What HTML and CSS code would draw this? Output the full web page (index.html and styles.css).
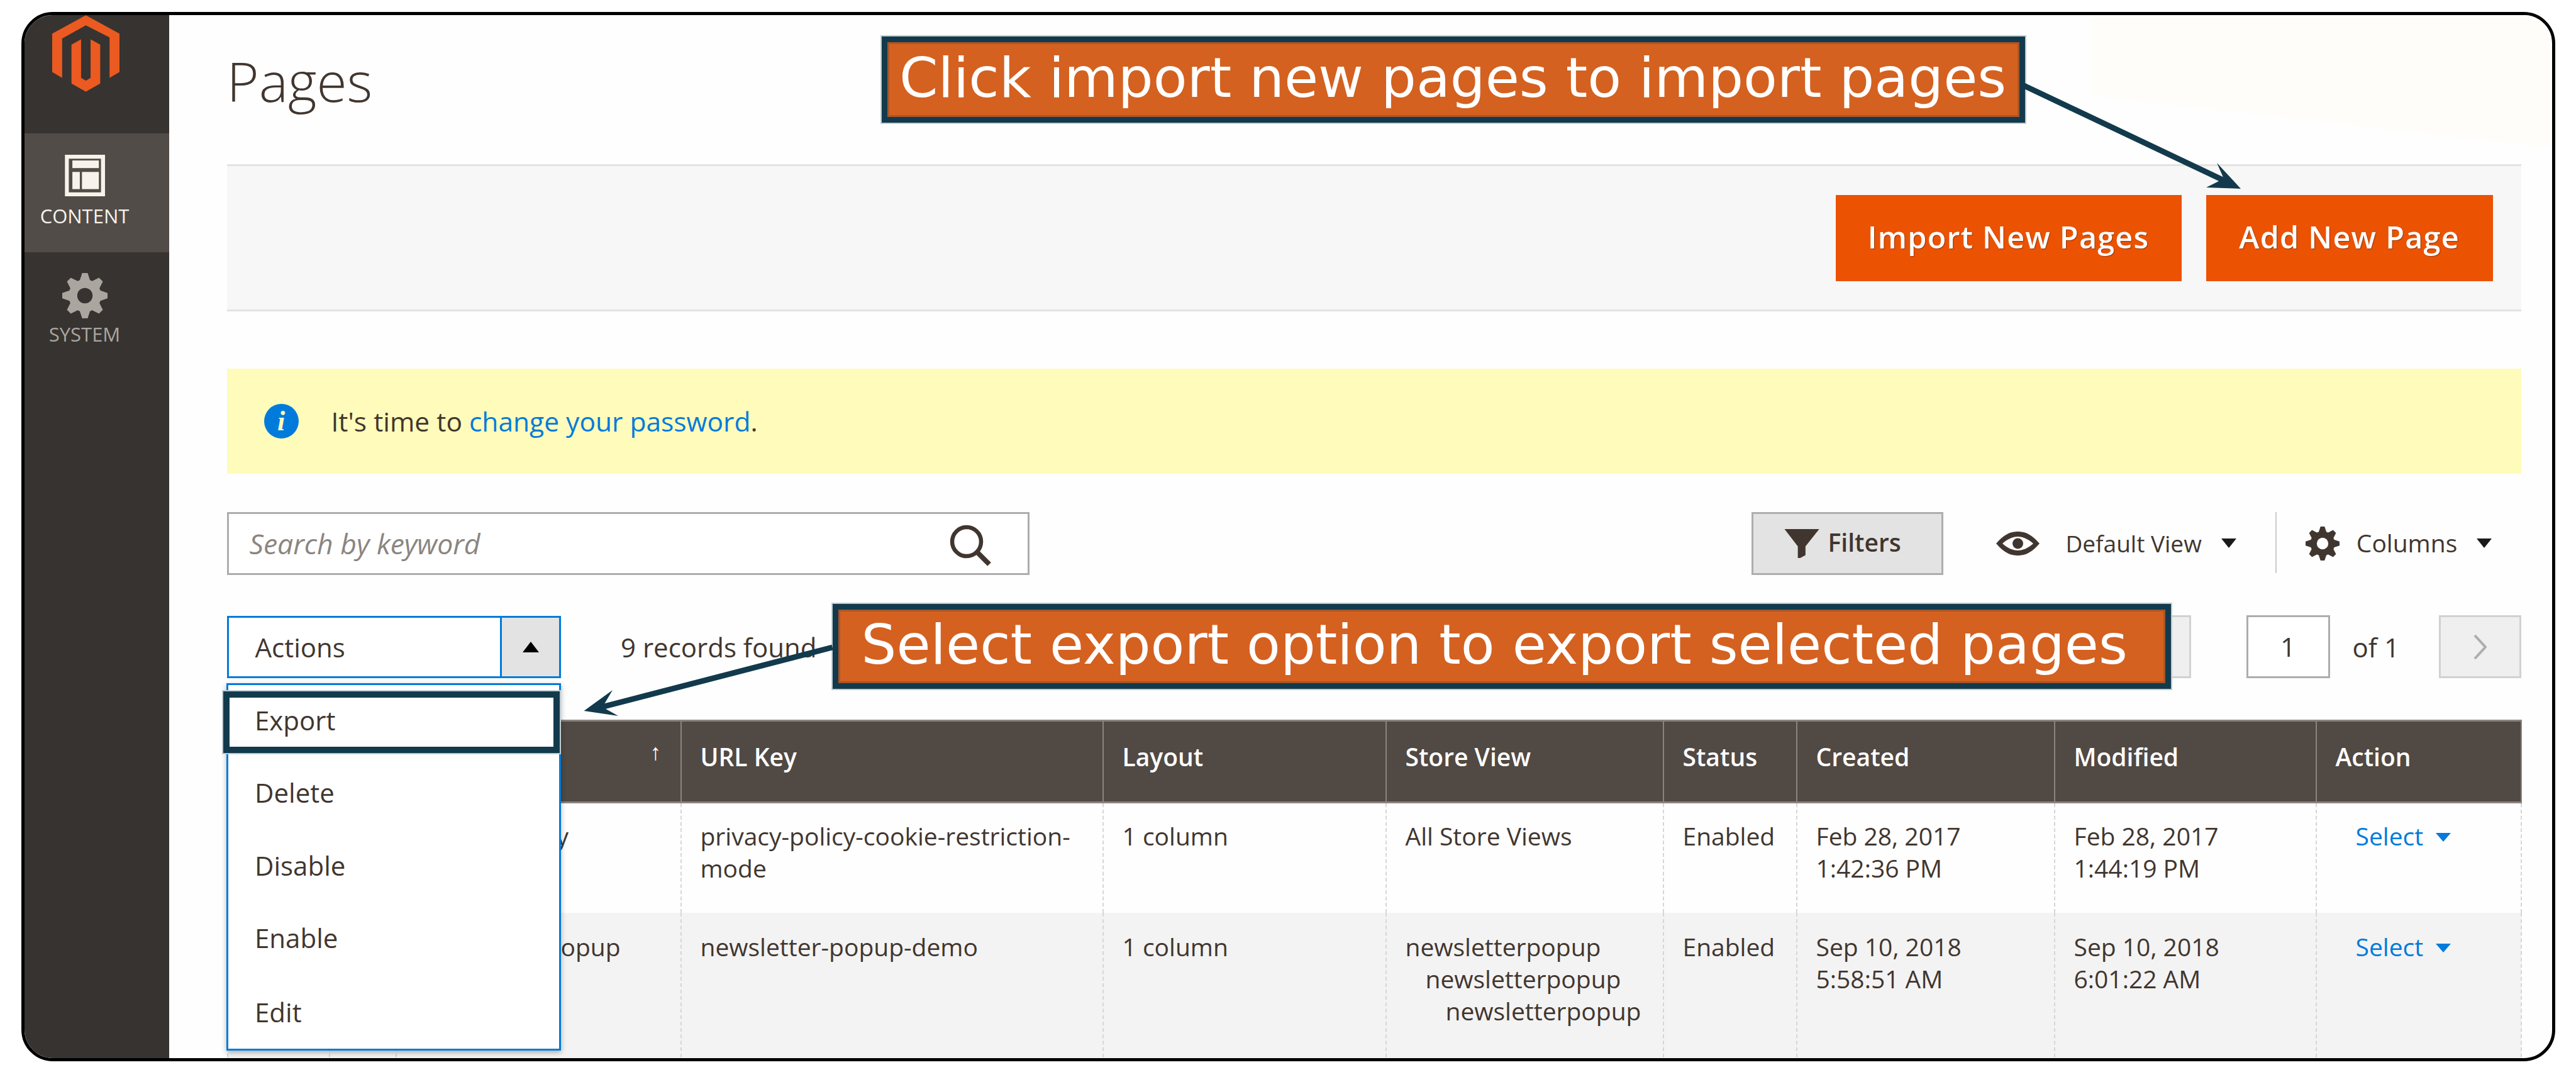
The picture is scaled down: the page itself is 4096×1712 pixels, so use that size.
FILE: index.html
```html
<!DOCTYPE html>
<html lang="en">
<head>
<meta charset="utf-8">
<title>Pages</title>
<link rel="stylesheet" href="styles.css">
</head>
<body>
<div class="frame">
  <aside class="sidebar">
    <div class="logo">
      <svg class="logo-svg" viewBox="366 100 468 532"><path d="M600 100 834 228V495L765 535V255L600 170 435 262V535L366 495V228Z"/><path d="M500 305 567 268V535L600 555 633 535V268L700 305V575L600 632 500 575Z"/></svg>
    </div>
    <div class="nav-item nav-active">
      <svg class="nav-icon-content" viewBox="255 117 305 290"><path fill-rule="evenodd" d="M268 117H548V407H268ZM295 145V380H520V145Z"/><rect x="320" y="157" width="185" height="53"/><rect x="320" y="237" width="52" height="120"/><rect x="387" y="237" width="118" height="120"/></svg>
      <span class="nav-label">CONTENT</span>
    </div>
    <div class="nav-item">
      <svg class="nav-icon-gear" viewBox="0 0 100 100"><g class="gear-teeth"><circle cx="50" cy="50" r="36"/><polygon points="44,0 56,0 62,18 38,18"/><polygon points="44,0 56,0 62,18 38,18" transform="rotate(45 50 50)"/><polygon points="44,0 56,0 62,18 38,18" transform="rotate(90 50 50)"/><polygon points="44,0 56,0 62,18 38,18" transform="rotate(135 50 50)"/><polygon points="44,0 56,0 62,18 38,18" transform="rotate(180 50 50)"/><polygon points="44,0 56,0 62,18 38,18" transform="rotate(225 50 50)"/><polygon points="44,0 56,0 62,18 38,18" transform="rotate(270 50 50)"/><polygon points="44,0 56,0 62,18 38,18" transform="rotate(315 50 50)"/></g><circle class="gear-hole-dark" cx="50" cy="50" r="17"/></svg>
      <span class="nav-label nav-label-dim">SYSTEM</span>
    </div>
  </aside>
  <main class="main">
    <h1 class="title">Pages</h1>
    <div class="page-actions">
      <button class="btn-primary btn-import">Import New Pages</button>
      <button class="btn-primary btn-add">Add New Page</button>
    </div>
    <div class="notice">
      <span class="notice-icon">i</span>
      <span class="notice-text">It's time to <a class="link">change your password</a>.</span>
    </div>
    <div class="search-row">
      <div class="search">
        <span class="placeholder">Search by keyword</span>
        <svg class="search-icon" viewBox="0 0 80 80"><circle cx="32" cy="32" r="23" fill="none" stroke-width="6.500"/><path d="M49 49 68 68" fill="none" stroke-width="8"/></svg>
      </div>
      <button class="btn-filter">
        <svg class="filter-icon" viewBox="48 80 252 200"><polygon points="50,80 290,80 195,200 195,260 155,282 142,282 142,200"/></svg>
        <span class="filter-label">Filters</span>
      </button>
      <svg class="eye-icon" viewBox="0 0 69 38"><path fill-rule="evenodd" d="M0 19C14 3 24 0 34.500 0S55 3 69 19C55 35 45 38 34.500 38S14 35 0 19ZM10 19C18 26 26 30 34.500 30S51 26 59 19C51 12 43 8 34.500 8S18 12 10 19Z"/><circle cx="34.500" cy="19" r="8.500"/></svg>
      <span class="tool-label tool-view">Default View</span>
      <span class="caret-down"></span>
      <span class="divider"></span>
      <svg class="cog-icon" viewBox="0 0 100 100"><g><circle cx="50" cy="50" r="36"/><polygon points="44,0 56,0 62,18 38,18"/><polygon points="44,0 56,0 62,18 38,18" transform="rotate(45 50 50)"/><polygon points="44,0 56,0 62,18 38,18" transform="rotate(90 50 50)"/><polygon points="44,0 56,0 62,18 38,18" transform="rotate(135 50 50)"/><polygon points="44,0 56,0 62,18 38,18" transform="rotate(180 50 50)"/><polygon points="44,0 56,0 62,18 38,18" transform="rotate(225 50 50)"/><polygon points="44,0 56,0 62,18 38,18" transform="rotate(270 50 50)"/><polygon points="44,0 56,0 62,18 38,18" transform="rotate(315 50 50)"/></g><circle class="gear-hole-light" cx="50" cy="50" r="17"/></svg>
      <span class="tool-label tool-columns">Columns</span>
      <span class="caret-down"></span>
    </div>
    <div class="actions-row">
      <div class="actions-select">
        <span class="actions-label">Actions</span>
        <span class="actions-toggle"><span class="caret-up"></span></span>
      </div>
      <span class="records">9 records found</span>
      <div class="pager">
        <span class="page-btn"></span>
        <span class="page-input">1</span>
        <span class="page-of">of 1</span>
        <span class="page-btn page-next"><svg class="chevron" viewBox="0 0 21 39"><path d="M2 1 19 19.500 2 38" fill="none" stroke-width="4"/></svg></span>
      </div>
    </div>
    <table class="grid">
      <colgroup>
        <col class="c1"><col class="c2"><col class="c3"><col class="c4"><col class="c5"><col class="c6"><col class="c7"><col class="c8"><col class="c9"><col class="c10">
      </colgroup>
      <thead>
        <tr><th></th><th>ID</th><th><span class="sort">↑</span>Title</th><th>URL Key</th><th>Layout</th><th>Store View</th><th>Status</th><th>Created</th><th>Modified</th><th>Action</th></tr>
      </thead>
      <tbody>
        <tr class="row-a">
          <td></td><td>1</td><td>Privacy Policy</td>
          <td>privacy-policy-cookie-restriction-mode</td>
          <td>1 column</td><td>All Store Views</td><td>Enabled</td>
          <td>Feb 28, 2017<br>1:42:36 PM</td><td>Feb 28, 2017<br>1:44:19 PM</td>
          <td class="cell-action"><a class="link">Select</a><span class="caret-select"></span></td>
        </tr>
        <tr class="row-b">
          <td></td><td>2</td><td>Newsletter Popup</td>
          <td>newsletter-popup-demo</td>
          <td>1 column</td>
          <td class="cell-store"><div>newsletterpopup</div><div class="ind1">newsletterpopup</div><div class="ind2">newsletterpopup</div></td>
          <td>Enabled</td>
          <td>Sep 10, 2018<br>5:58:51 AM</td><td>Sep 10, 2018<br>6:01:22 AM</td>
          <td class="cell-action"><a class="link">Select</a><span class="caret-select"></span></td>
        </tr>
      </tbody>
    </table>
  </main>
  <div class="glare"></div>
</div>

<ul class="dropdown">
  <li>Export</li><li>Delete</li><li>Disable</li><li>Enable</li><li>Edit</li>
</ul>
<div class="export-highlight"></div>
<div class="callout callout-import">Click import new pages to import pages</div>
<div class="callout callout-export">Select export option to export selected pages</div>
<svg class="arrows" viewBox="0 0 4096 1712">
  <line x1="3218" y1="136" x2="3545" y2="291"/>
  <polygon points="3563,300 3525,259 3536,284 3508,298"/>
  <line x1="1323.600" y1="1029" x2="945" y2="1127"/>
  <polygon points="928.500,1130 974,1097 958,1124 983,1138"/>
</svg>
</body>
</html>
```
FILE: styles.css
```css
* { box-sizing: border-box; }
html, body { margin: 0; padding: 0; background: #fff; }
body {
  width: 4096px;
  height: 1712px;
  overflow: hidden;
  font-family: "Open Sans", sans-serif;
  color: #41362f;
}
.frame {
  position: relative;
  margin: 18.5px 0 0 34px;
  width: 4028.6px;
  height: 1668.5px;
  border: 5.5px solid #000;
  border-radius: 50px;
  display: flex;
  overflow: hidden;
  background: #fefefe;
}
.glare {
  position: absolute;
  left: 3287.500px;
  top: 0;
  width: 730px;
  height: 212px;
  background: #fffdfa;
  clip-path: polygon(0 0, 100% 0, 100% 100%, 0 61%);
}
/* sidebar */
.sidebar {
  flex: 0 0 230px;
  background: #373330;
  display: flex;
  flex-direction: column;
}
.logo { height: 188.600px; padding-left: 44px; }
.logo-svg { display: block; width: 107px; height: 122px; fill: #eb5a20; }
.nav-item {
  height: 188.600px;
  padding: 33.500px 39px 0 0;
  display: flex;
  flex-direction: column;
  align-items: center;
}
.nav-active { background: #524c48; }
.nav-icon-content { display: block; width: 70px; height: 66px; fill: #f7f3eb; }
.nav-icon-gear { display: block; width: 72px; height: 72px; }
.gear-teeth { fill: #aaa69f; }
.gear-hole-dark { fill: #373330; }
.gear-hole-light { fill: #fefefe; }
.nav-label {
  margin-top: 10px;
  font-size: 31px;
  line-height: 42px;
  color: #f7f3eb;
  white-space: nowrap;
}
.nav-label-dim { color: #aaa69f; margin-top: 4px; }
/* main */
.main { position: relative; z-index: 1; flex: 1; min-width: 0; padding: 62px 49px 0 91.500px; }
.title {
  margin: 0;
  font-size: 87.500px;
  line-height: 84px;
  height: 175px;
  font-weight: 300;
  color: #41362f;
}
.page-actions {
  height: 234px;
  background: #f7f7f7;
  border-top: 3px solid #e3e3e3;
  border-bottom: 3px solid #e3e3e3;
  display: flex;
  justify-content: flex-end;
  align-items: flex-start;
  padding: 46px 45px 0 0;
  gap: 39px;
}
.btn-primary {
  height: 137px;
  background: #eb5202;
  border: 0;
  color: #fff;
  font-family: inherit;
  font-weight: 600;
  font-size: 48.500px;
  letter-spacing: 0.025em;
  text-shadow: 1px 1px 1px rgba(0,0,0,.35);
  padding: 0 0 4px;
}
.btn-import { width: 550px; }
.btn-add { width: 456px; }
.notice {
  margin-top: 91px;
  height: 167px;
  background: #fffbbb;
  display: flex;
  align-items: center;
  padding-left: 59px;
  font-size: 42.500px;
  color: #41362f;
}
.notice-icon {
  flex: 0 0 55px;
  height: 55px;
  border-radius: 50%;
  background: #007bdb;
  color: #fffbbb;
  font-family: "Liberation Serif", serif;
  font-style: italic;
  font-weight: 700;
  font-size: 44px;
  line-height: 55px;
  text-align: center;
  margin-right: 52px;
}
.link { color: #007bdb; }
.search-row {
  margin-top: 61px;
  height: 100px;
  display: flex;
  align-items: center;
  font-size: 38px;
}
.search {
  flex: 0 0 1276px;
  height: 100px;
  border: 3px solid #adadad;
  display: flex;
  align-items: center;
  justify-content: space-between;
  padding: 0 49px 0 33px;
  background: #fff;
}
.placeholder { font-style: italic; color: #8a8580; font-size: 44.500px; }
.search-icon { display: block; width: 80px; height: 80px; stroke: #41362f; margin-top: 10px; }
.btn-filter {
  margin-left: 1148px;
  flex: 0 0 305px;
  height: 100px;
  background: #e3e3e3;
  border: 3px solid #adadad;
  display: flex;
  align-items: center;
  padding: 0 0 0 49px;
  font-family: inherit;
  font-size: 39px;
  font-weight: 600;
  color: #41362f;
}
.filter-label { margin-top: -4px; }
.filter-icon { display: block; width: 58px; height: 46px; fill: #41362f; margin-right: 12px; }
.eye-icon { display: block; width: 69px; height: 38px; fill: #41362f; margin-left: 84px; }
.tool-label { white-space: nowrap; }
.tool-view { margin-left: 42px; font-size: 37px; }
.caret-down {
  width: 0; height: 0;
  border-left: 12px solid transparent;
  border-right: 12px solid transparent;
  border-top: 15px solid #1a1a1a;
  margin-left: 31px;
}
.divider { width: 2px; height: 97px; background: #ccc; margin-left: 62px; margin-top: -3px; }
.cog-icon { display: block; width: 54px; height: 54px; fill: #41362f; margin-left: 46px; }
.tool-columns { margin-left: 27px; font-size: 39px; margin-top: -3px; }
.actions-row {
  margin-top: 65px;
  height: 99px;
  display: flex;
  align-items: center;
  font-size: 42px;
}
.actions-select {
  flex: 0 0 531.500px;
  height: 99px;
  border: 3px solid #007bdb;
  display: flex;
  align-items: center;
  background: #fff;
}
.actions-label { flex: 1; padding-left: 42px; }
.actions-toggle {
  flex: 0 0 94px;
  height: 100%;
  border-left: 3px solid #007bdb;
  background: #e3e3e3;
  display: flex;
  align-items: center;
  justify-content: center;
}
.caret-up {
  width: 0; height: 0;
  border-left: 13px solid transparent;
  border-right: 13px solid transparent;
  border-bottom: 17px solid #000;
}
.records { margin-left: 95px; white-space: nowrap; }
.pager { margin-left: auto; display: flex; align-items: center; }
.page-btn {
  width: 131px;
  height: 100px;
  background: #efefef;
  border: 3px solid #d1d1d1;
  display: flex;
  align-items: center;
  justify-content: center;
}
.page-input {
  width: 133px;
  height: 100px;
  margin-left: 88px;
  background: #fff;
  border: 3px solid #adadad;
  text-align: center;
  line-height: 94px;
}
.page-of { margin-left: 36px; width: 137px; }
.chevron { display: block; width: 21px; height: 39px; stroke: #adadad; }
.grid {
  margin-top: 66px;
  width: 3647px;
  table-layout: fixed;
  border-collapse: collapse;
  font-size: 39px;
  line-height: 51px;
}
.c1 { width: 162px; } .c2 { width: 106px; } .c3 { width: 453px; } .c4 { width: 671px; }
.c5 { width: 450px; } .c6 { width: 441px; } .c7 { width: 212px; } .c8 { width: 410px; }
.c9 { width: 416px; } .c10 { width: 326px; }
.grid th {
  background: #514943;
  color: #fff;
  font-weight: 600;
  text-align: left;
  vertical-align: top;
  height: 130px;
  padding: 30px 8px 0 30px;
  border: 3px solid #8a837f;
  border-width: 3px 2px;
  white-space: nowrap;
}
.sort { float: right; font-size: 36px; font-weight: 300; margin-right: 22px; line-height: 36px; }
.grid td {
  vertical-align: top;
  padding: 26px 8px 0 30px;
  border-left: 2px dashed #d6d6d6;
  border-right: 2px dashed #d6d6d6;
  color: #41362f;
  word-break: normal;
}
.row-a td { height: 176px; background: #fefefe; }
.row-b td { height: 240px; background: #f3f3f3; }
.grid .row-b td { padding-top: 28px; }
.cell-store { white-space: nowrap; overflow: visible; }
.ind1 { padding-left: 32px; }
.ind2 { padding-left: 64px; }
.grid .cell-action { padding-left: 62px; white-space: nowrap; }
.caret-select {
  display: inline-block;
  width: 0; height: 0;
  margin-left: 20px;
  border-left: 12.500px solid transparent;
  border-right: 12.500px solid transparent;
  border-top: 14px solid #007bdb;
  vertical-align: 6px;
}
/* overlays */
.dropdown {
  position: absolute;
  z-index: 2;
  left: 360px;
  top: 1085.600px;
  width: 531.500px;
  height: 584.400px;
  margin: 0;
  padding: 0;
  list-style: none;
  background: #fff;
  border: 3px solid #007bdb;
  box-shadow: 0 3px 8px rgba(0,0,0,.3);
  font-size: 42px;
}
.dropdown li { height: 115.500px; line-height: 112px; padding-left: 42px; }
.dropdown li:last-child { margin-top: 2px; }
.export-highlight {
  position: absolute;
  z-index: 3;
  left: 354.500px;
  top: 1099px;
  width: 535.500px;
  height: 98px;
  border: 10px solid #123a4c;
  box-shadow: 0 0 0 2px #bfcdd2;
}
.callout {
  position: absolute;
  z-index: 3;
  border: 9px solid #123a4c;
  background: #d46120;
  color: #fff;
  font-family: "DejaVu Sans", sans-serif;
  font-size: 88px;
  line-height: 1;
  white-space: nowrap;
  display: flex;
  align-items: center;
  box-shadow: inset 0 0 0 3px #aa5427, 0 0 0 2px #bfcdd2;
}
.callout-import {
  left: 1402px;
  top: 57.600px;
  width: 1818px;
  height: 137.400px;
  padding: 0 0 5px 19px;
}
.callout-export {
  left: 1323.600px;
  top: 960px;
  width: 2128.400px;
  height: 134.500px;
  padding: 0 0 4px 37px;
}
.arrows {
  position: absolute;
  z-index: 4;
  left: 0;
  top: 0;
  width: 4096px;
  height: 1712px;
  pointer-events: none;
  fill: #123a4c;
}
.arrows line { stroke: #123a4c; stroke-width: 9px; }
```
